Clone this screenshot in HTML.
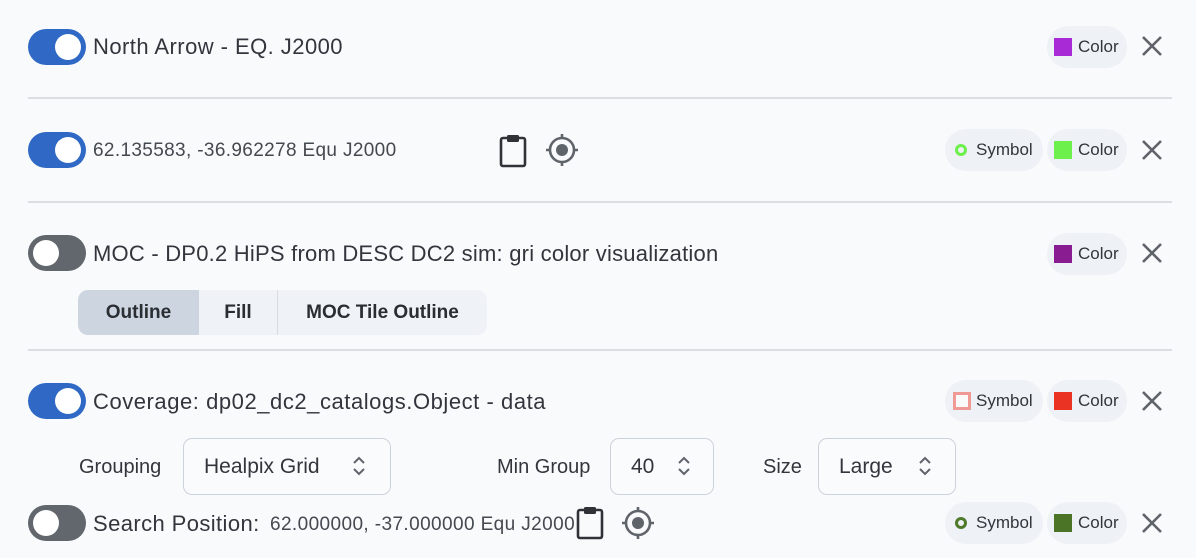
<!DOCTYPE html>
<html><head><meta charset="utf-8"><style>
*{box-sizing:border-box;margin:0;padding:0}
body{width:1196px;height:558px;background:#f9fafc;font-family:"Liberation Sans",sans-serif;color:#32363c;position:relative;overflow:hidden}
.a{position:absolute}
.t{position:absolute;white-space:nowrap;line-height:30px}
.tog{position:absolute;width:58px;height:36px;border-radius:18px;background:#2f69c5}
.tog::after{content:"";position:absolute;top:5px;left:27px;width:26px;height:26px;border-radius:50%;background:#fff}
.tog.off{background:#62676e}
.tog.off::after{left:5px}
.hr{position:absolute;left:28px;width:1144px;height:2px;background:#dcdee2}
.chip{position:absolute;height:42px;border-radius:21px;background:#eef1f6;font-size:17px;line-height:42px;color:#32363c;white-space:nowrap}
.sq{position:absolute;left:7px;top:12px;width:18px;height:18px}
.x{position:absolute;width:22px;height:22px}
.sel{position:absolute;top:438px;height:57px;border:1px solid #ccd2dc;border-radius:9px;font-size:21px;line-height:55px;padding-left:20px;background:#fafbfd}
.lbl{position:absolute;top:452px;font-size:20px;line-height:30px}
</style></head><body>
<svg width="0" height="0" style="position:absolute"><defs>
<g id="xx"><path d="M2 2L20 20M20 2L2 20" stroke="#5f646b" stroke-width="2.6" fill="none"/></g>
<g id="clip"><rect x="2" y="5" width="24" height="28" rx="2" fill="none" stroke="#2f3338" stroke-width="2.6"/><rect x="8" y="2" width="12" height="7" rx="1.5" fill="#2f3338"/></g>
<g id="tgt"><circle cx="18" cy="18" r="12" fill="none" stroke="#5f646b" stroke-width="2.6"/><circle cx="18" cy="18" r="6" fill="#5f646b"/><path d="M18 2v5M18 29v5M2 18h5M29 18h5" stroke="#5f646b" stroke-width="2.6"/></g>
<g id="chev"><path d="M1 7L6 2L11 7M1 13L6 18L11 13" fill="none" stroke="#5f646b" stroke-width="2"/></g>
</defs></svg>

<!-- Row 1 -->
<div class="tog" style="left:28px;top:29px"></div>
<div class="t" style="left:93px;top:32px;font-size:22px;letter-spacing:0.45px">North Arrow - EQ. J2000</div>
<div class="chip" style="left:1047px;top:26px;width:80px"><div class="sq" style="background:#a829d6"></div><span style="position:absolute;left:31px">Color</span></div>
<svg class="x" style="left:1141px;top:35px"><use href="#xx"/></svg>
<div class="hr" style="top:97px"></div>

<!-- Row 2 -->
<div class="tog" style="left:28px;top:132px"></div>
<div class="t" style="left:93px;top:136px;font-size:19px;color:#44494f;letter-spacing:0.35px">62.135583, -36.962278 Equ J2000</div>
<svg class="a" style="left:499px;top:133px" width="30" height="36"><use href="#clip"/></svg>
<svg class="a" style="left:544px;top:132px" width="36" height="36"><use href="#tgt"/></svg>
<div class="chip" style="left:945px;top:129px;width:98px"><svg class="a" style="left:9px;top:14px" width="14" height="14"><circle cx="7" cy="7" r="4.5" fill="none" stroke="#6cf04c" stroke-width="3"/></svg><span style="position:absolute;left:31px">Symbol</span></div>
<div class="chip" style="left:1047px;top:129px;width:80px"><div class="sq" style="background:#6ef04c"></div><span style="position:absolute;left:31px">Color</span></div>
<svg class="x" style="left:1141px;top:139px"><use href="#xx"/></svg>
<div class="hr" style="top:201px"></div>

<!-- Row 3 -->
<div class="tog off" style="left:28px;top:235px"></div>
<div class="t" style="left:93px;top:239px;font-size:22px;letter-spacing:0.22px">MOC - DP0.2 HiPS from DESC DC2 sim: gri color visualization</div>
<div class="chip" style="left:1047px;top:233px;width:80px"><div class="sq" style="background:#8a1c92"></div><span style="position:absolute;left:31px">Color</span></div>
<svg class="x" style="left:1141px;top:242px"><use href="#xx"/></svg>
<div class="a" style="left:78px;top:290px;width:409px;height:45px;border-radius:10px;background:#eff2f7;overflow:hidden;font-size:19px;font-weight:bold;line-height:45px;color:#2a2e33">
<div class="a" style="left:0;top:0;width:121px;height:45px;background:#ccd5e0;text-align:center">Outline</div>
<div class="a" style="left:121px;top:0;width:79px;height:45px;text-align:center;border-right:1px solid #d8dce2">Fill</div>
<div class="a" style="left:200px;top:0;width:209px;height:45px;text-align:center">MOC Tile Outline</div>
</div>
<div class="hr" style="top:349px"></div>

<!-- Row 4 -->
<div class="tog" style="left:28px;top:383px"></div>
<div class="t" style="left:93px;top:387px;font-size:22px;letter-spacing:0.55px">Coverage: dp02_dc2_catalogs.Object - data</div>
<div class="chip" style="left:945px;top:380px;width:98px"><div class="sq" style="left:8px;top:12px;border:3px solid #ef9a94;background:#fafafa"></div><span style="position:absolute;left:31px">Symbol</span></div>
<div class="chip" style="left:1047px;top:380px;width:80px"><div class="sq" style="background:#ea3323"></div><span style="position:absolute;left:31px">Color</span></div>
<svg class="x" style="left:1141px;top:390px"><use href="#xx"/></svg>

<div class="lbl" style="left:79px">Grouping</div>
<div class="sel" style="left:183px;width:208px">Healpix Grid<svg class="a" style="left:169px;top:17px" width="12" height="20"><use href="#chev"/></svg></div>
<div class="lbl" style="left:497px">Min Group</div>
<div class="sel" style="left:610px;width:104px">40<svg class="a" style="left:67px;top:17px" width="12" height="20"><use href="#chev"/></svg></div>
<div class="lbl" style="left:763px">Size</div>
<div class="sel" style="left:818px;width:138px">Large<svg class="a" style="left:100px;top:17px" width="12" height="20"><use href="#chev"/></svg></div>

<!-- Row 5 -->
<div class="tog off" style="left:28px;top:505px"></div>
<div class="t" style="left:93px;top:509px;font-size:22px;letter-spacing:0.4px">Search Position:</div>
<div class="t" style="left:270px;top:510px;font-size:19px;color:#44494f;letter-spacing:0.4px">62.000000, -37.000000 Equ J2000</div>
<svg class="a" style="left:576px;top:505px" width="30" height="36"><use href="#clip"/></svg>
<svg class="a" style="left:620px;top:505px" width="36" height="36"><use href="#tgt"/></svg>
<div class="chip" style="left:945px;top:502px;width:98px"><svg class="a" style="left:9px;top:14px" width="14" height="14"><circle cx="7" cy="7" r="4.5" fill="none" stroke="#4e7a2a" stroke-width="3"/></svg><span style="position:absolute;left:31px">Symbol</span></div>
<div class="chip" style="left:1047px;top:502px;width:80px"><div class="sq" style="background:#4b7426"></div><span style="position:absolute;left:31px">Color</span></div>
<svg class="x" style="left:1141px;top:512px"><use href="#xx"/></svg>
</body></html>
